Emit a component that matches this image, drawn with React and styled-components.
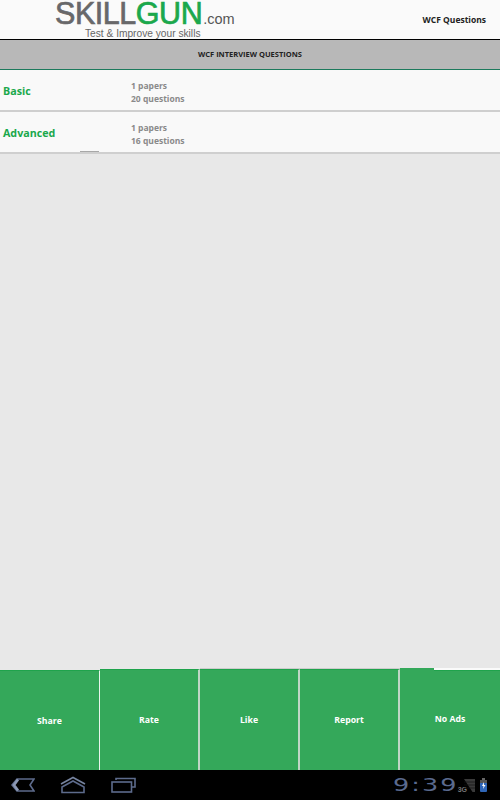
import React from 'react';
import styled, { createGlobalStyle } from 'styled-components';

const GlobalStyle = createGlobalStyle`
	html, body {
		margin: 0;
		padding: 0;
		background: #000;
	}
	#root {
		width: 500px;
		height: 800px;
	}
`;

const Page = styled.div`
	display: flex;
	flex-direction: column;
	width: 500px;
	height: 800px;
	overflow: hidden;
	background: #e8e8e8;
	font-family: "Open Sans", "Noto Sans", sans-serif;
`;

const Header = styled.header`
	display: flex;
	justify-content: space-between;
	align-items: flex-start;
	height: 39px;
	padding: 0 14px 0 55px;
	background: #fafafa;
	border-bottom: 1px solid #000;
`;

const Logo = styled.div`
	display: flex;
	flex-direction: column;
	font-family: "Liberation Sans", Arial, sans-serif;
`;

const LogoLine = styled.div`
	display: flex;
	align-items: baseline;
	height: 28px;
	line-height: 26px;
`;

const LogoWord = styled.span`
	font-size: 30.5px;
	letter-spacing: -0.45px;
	color: ${p => p.$color};
	-webkit-text-stroke: 0.7px ${p => p.$color};
`;

const LogoDomain = styled.span`
	margin-left: 1px;
	font-size: 14.5px;
	color: #555;
`;

const LogoTagline = styled.div`
	margin-left: 30px;
	font-size: 10.2px;
	line-height: 11px;
	color: #666;
`;

const PageName = styled.div`
	margin-top: 13px;
	font-size: 8.5px;
	font-weight: 700;
	line-height: 14px;
	color: #222;
`;

const Band = styled.div`
	display: flex;
	justify-content: center;
	align-items: center;
	box-sizing: border-box;
	height: 30px;
	padding-bottom: 2px;
	background: #b8b8b8;
	border-bottom: 1px solid #1c7a5c;
	font-size: 7.5px;
	font-weight: 700;
	color: #222;
`;

const List = styled.div`
	flex: 1;
	display: flex;
	flex-direction: column;
`;

const Row = styled.div`
	position: relative;
	display: flex;
	align-items: center;
	height: 40px;
	padding-left: 3px;
	background: #f9f9f9;
	border-bottom: 2px solid #cfcfcf;

	${p => p.$notch && `
		&::after {
			content: '';
			position: absolute;
			left: 80px;
			bottom: 0;
			width: 19px;
			height: 1px;
			background: #a8a8a8;
		}
	`}
`;

const RowTitle = styled.div`
	width: 128px;
	padding-top: 2px;
	font-size: 10.7px;
	font-weight: 700;
	color: #1ba84c;
`;

const RowMeta = styled.div`
	padding-top: 5px;
	font-size: 8.5px;
	font-weight: 700;
	line-height: 12.5px;
	color: #8a8a8a;
`;

const Footer = styled.footer`
	display: flex;
	align-items: flex-end;
	height: 102px;
`;

const FooterButton = styled.div`
	position: relative;
	display: flex;
	justify-content: center;
	align-items: center;
	box-sizing: border-box;
	width: 100px;
	height: ${p => p.$height}px;
	padding-bottom: ${p => p.$lift}px;
	background: #34a85a;
	border-top: 1px solid #1fa34c;
	border-right: ${p => (p.$divider ? `${p.$dividerWidth}px solid ${p.$divider}` : 'none')};
	box-shadow: ${p => (p.$rim ? '0 -1px 0 #cccccc' : 'none')};
	font-size: 8.7px;
	font-weight: 700;
	color: #fff;

	${p => p.$tab && `
		&::before {
			content: '';
			position: absolute;
			left: 0;
			top: -3px;
			width: 34px;
			height: 3px;
			background: #34a85a;
		}
		&::after {
			content: '';
			position: absolute;
			left: 34px;
			right: 0;
			top: -3px;
			height: 2px;
			background: #fafafa;
		}
	`}
`;

const NavBar = styled.nav`
	display: flex;
	justify-content: space-between;
	align-items: center;
	height: 30px;
	padding: 0 12px 0 11px;
	background: #000;
`;

const NavIcons = styled.div`
	display: flex;
	align-items: center;
	gap: 25px;
`;

const Status = styled.div`
	display: flex;
	align-items: center;
`;

const Clock = styled.span`
	display: inline-block;
	width: 65px;
	font-family: "DejaVu Sans", sans-serif;
	font-size: 17px;
	letter-spacing: 1.4px;
	line-height: 16px;
	color: #5a6a8e;
	transform: scaleX(1.5);
	transform-origin: left center;
`;

const Network = styled.span`
	margin: 8px -3px 0 0;
	font-family: "Liberation Sans", sans-serif;
	font-size: 7px;
	font-weight: 700;
	color: #777;
`;

const StatusIcons = styled.div`
	display: flex;
	align-items: center;
	gap: 4px;
`;

const buttons = [
	{ name: 'Share', height: 100, lift: 0, divider: '#e8f5ec', dividerWidth: 1 },
	{ name: 'Rate', height: 101, lift: 0, divider: '#c0d6c6', dividerWidth: 2 },
	{ name: 'Like', height: 101, lift: 1, divider: '#c0d6c6', dividerWidth: 2, rim: true },
	{ name: 'Report', height: 101, lift: 1, divider: '#c0d6c6', dividerWidth: 2, rim: true },
	{ name: 'No Ads', height: 100, lift: 3, tab: true },
];

const BackIcon = () => (
	<svg width="24" height="14" viewBox="0 0 24 14" fill="none" stroke="#5d6b8c" strokeWidth="1.6">
		<path d="M6 1H23L19 7L23 13H6L1 7Z" />
		<path d="M7 1.5L3 7L7 12.5" strokeWidth="2.6" stroke="#8b97b3" />
	</svg>
);

const HomeIcon = () => (
	<svg width="26" height="18" viewBox="0 0 26 18" fill="none" stroke="#5d6b8c" strokeWidth="1.6">
		<path d="M1 8L13 1.5L25 8" stroke="#76839f" />
		<path d="M2 16.5H24V11L13 5L2 11Z" />
	</svg>
);

const RecentIcon = () => (
	<svg width="25" height="16" viewBox="0 0 25 16" fill="none" stroke="#5d6b8c" strokeWidth="1.6">
		<path d="M5 3V1.5H24V10H21" />
		<rect x="1" y="5" width="19.5" height="10" />
	</svg>
);

const SignalIcon = () => (
	<svg width="11" height="13" viewBox="0 0 11 13">
		<path d="M0 0H11V13H8.5Z" fill="#3a3a3a" />
		<path d="M0 3H11M0 6H11M0 9H11" stroke="#111" strokeWidth="0.7" />
	</svg>
);

const BatteryIcon = () => (
	<svg width="9" height="15" viewBox="0 0 9 15">
		<rect x="3" y="0" width="3" height="2" fill="#666" />
		<rect x="1" y="2" width="7" height="12" rx="1" fill="#2f66b8" />
		<rect x="1" y="2" width="7" height="3" fill="#555" />
		<path d="M5 4L3 8H4.5L4 11L6.5 7H5Z" fill="#fff" />
	</svg>
);

export default function App() {
	return (
		<Page>
			<GlobalStyle />
			<Header>
				<Logo>
					<LogoLine>
						<LogoWord $color="#68686a">SKILL</LogoWord>
						<LogoWord $color="#1ba84c">GUN</LogoWord>
						<LogoDomain>.com</LogoDomain>
					</LogoLine>
					<LogoTagline>Test &amp; Improve your skills</LogoTagline>
				</Logo>
				<PageName>WCF Questions</PageName>
			</Header>
			<Band>WCF INTERVIEW QUESTIONS</Band>
			<List>
				<Row>
					<RowTitle>Basic</RowTitle>
					<RowMeta>1 papers<br />20 questions</RowMeta>
				</Row>
				<Row $notch>
					<RowTitle>Advanced</RowTitle>
					<RowMeta>1 papers<br />16 questions</RowMeta>
				</Row>
			</List>
			<Footer>
				{buttons.map(b => (
					<FooterButton
						key={b.name}
						$height={b.height}
						$lift={b.lift}
						$divider={b.divider}
						$dividerWidth={b.dividerWidth}
						$rim={b.rim}
						$tab={b.tab}
					>
						{b.name}
					</FooterButton>
				))}
			</Footer>
			<NavBar>
				<NavIcons>
					<BackIcon />
					<HomeIcon />
					<RecentIcon />
				</NavIcons>
				<Status>
					<Clock>9:39</Clock>
					<Network>3G</Network>
					<StatusIcons>
						<SignalIcon />
						<BatteryIcon />
					</StatusIcons>
				</Status>
			</NavBar>
		</Page>
	);
}
